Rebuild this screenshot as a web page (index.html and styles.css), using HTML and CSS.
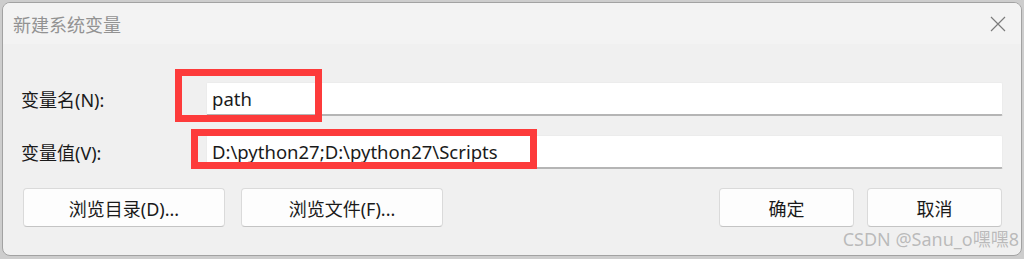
FILE: index.html
```html
<!DOCTYPE html>
<html lang="zh-CN">
<head>
    <meta charset="UTF-8">
    <meta name="viewport" content="width=device-width, initial-scale=1.0">
    <title>新建系统变量</title>
    <link rel="stylesheet" href="styles.css">
</head>
<body>
    <div class="dialog">
        <div class="title-bar">
            <span class="title">新建系统变量</span>
            <span class="close">
                <svg width="16" height="16" viewBox="0 0 16 16">
                    <path d="M1 1 L15 15 M15 1 L1 15" stroke="#7b7b7b" stroke-width="1.2" fill="none"/>
                </svg>
            </span>
        </div>
        <div class="content">
            <div class="form-row">
                <label for="var-name">变量名(N):</label>
                <input type="text" id="var-name" value="path">
            </div>
            <div class="form-row">
                <label for="var-value">变量值(V):</label>
                <input type="text" id="var-value" value="D:\python27;D:\python27\Scripts">
            </div>
            <div class="button-row">
                <div class="left-buttons">
                    <button class="btn wide">浏览目录(D)...</button>
                    <button class="btn wide">浏览文件(F)...</button>
                </div>
                <div class="right-buttons">
                    <button class="btn">确定</button>
                    <button class="btn">取消</button>
                </div>
            </div>
        </div>
        <!-- red annotation boxes -->
        <div class="mark mark-name"></div>
        <div class="mark mark-value"></div>
        <div class="watermark">CSDN @Sanu_o嘿嘿8</div>
    </div>
</body>
</html>
```

FILE: styles.css
```css
body {
    margin: 0;
    background-color: #cdcdcd;
    font-family: "Noto Sans", "Noto Sans CJK SC", sans-serif;
    height: 259px;
    overflow: hidden;
}
.dialog {
    position: relative;
    margin: 2px 2px 0 2px;
    height: 252px;
    background-color: #f0f0f0;
    border: 1px solid #a2a2a2;
    border-radius: 8px;
    overflow: hidden;
}
.title-bar {
    height: 41px;
    background-color: #f3f3f3;
    display: flex;
    align-items: center;
    justify-content: space-between;
    padding: 0 15px 0 10px;
}
.title {
    font-size: 18px;
    color: #929292;
}
.close {
    display: flex;
    align-items: center;
}
.content {
    padding: 38px 18px 0 18px;
}
.form-row {
    display: flex;
    align-items: center;
    height: 34px;
    margin-bottom: 19px;
}
.form-row label {
    width: 185px;
    font-size: 18px;
    color: #1a1a1a;
}
.form-row input {
    flex: 1;
    height: 34px;
    box-sizing: border-box;
    border: 1px solid #ececec;
    border-bottom: 2px solid #b5b5b5;
    border-radius: 2px;
    background-color: #fff;
    padding: 0 0 0 5px;
    font-family: "Noto Sans", "Noto Sans CJK SC", sans-serif;
    font-size: 18.5px;
    color: #1a1a1a;
    outline: none;
}
.button-row {
    display: flex;
    justify-content: space-between;
    margin-top: 6px;
    padding: 0 1px 0 2px;
}
.left-buttons,
.right-buttons {
    display: flex;
}
.left-buttons {
    gap: 16px;
}
.right-buttons {
    gap: 13px;
}
.btn {
    width: 135px;
    height: 39px;
    background-color: #fdfdfd;
    border: 1px solid #dadada;
    border-bottom-color: #c4c4c4;
    border-radius: 4px;
    font-family: "Noto Sans", "Noto Sans CJK SC", sans-serif;
    font-size: 18px;
    color: #1a1a1a;
    padding: 0;
}
.btn.wide {
    width: 202px;
}
.mark {
    position: absolute;
    border: 7px solid #fd3b3b;
    box-sizing: border-box;
}
.mark-name {
    left: 172px;
    top: 66px;
    width: 147px;
    height: 53px;
}
.mark-value {
    left: 188px;
    top: 126px;
    width: 346px;
    height: 40px;
}
.watermark {
    position: absolute;
    right: 2px;
    bottom: 4px;
    font-size: 18px;
    color: rgba(150, 150, 150, 0.6);
    white-space: nowrap;
}
```
